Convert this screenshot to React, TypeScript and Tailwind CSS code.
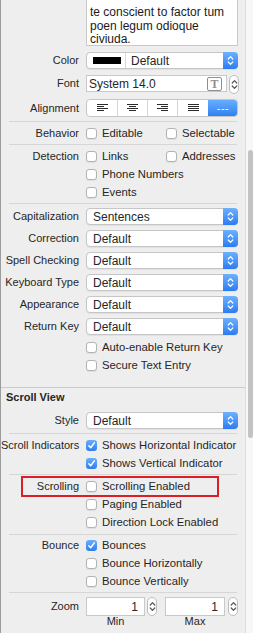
import React from 'react';

const Chevrons = ({ color = '#fff' }: { color?: string }) => (
  <svg width="7" height="13" viewBox="0 0 7 13" fill="none">
    <path d="M1.2 5 L3.5 2.6 L5.8 5" stroke={color} strokeWidth="1.2" strokeLinecap="round" strokeLinejoin="round" />
    <path d="M1.2 8 L3.5 10.4 L5.8 8" stroke={color} strokeWidth="1.2" strokeLinecap="round" strokeLinejoin="round" />
  </svg>
);

const Label = ({ children }: { children?: React.ReactNode }) => (
  <div className="w-[79px] shrink-0 pr-[1px] text-right whitespace-nowrap">{children}</div>
);

const Popup = ({ value, swatch }: { value: string; swatch?: boolean }) => (
  <div className="ml-[6px] flex h-[17px] w-[152px] items-center rounded-[4px] border border-[#c6c6c6] bg-white shadow-[0_1px_1px_rgba(0,0,0,0.06)]">
    {swatch && (
      <div className="flex h-full items-center border-r border-[#d8d8d8] pl-[6px] pr-[4px]">
        <div className="h-[7px] w-[28px] bg-black" />
      </div>
    )}
    <span className={`flex-1 text-[12px] ${swatch ? 'pl-[5px]' : 'pl-[6px]'}`}>{value}</span>
    <div className="-my-px -mr-px flex h-[17px] w-[15px] items-center justify-center rounded-r-[4px] bg-linear-to-b from-[#6cb1fd] to-[#2c7cf1]">
      <Chevrons />
    </div>
  </div>
);

const Check = ({ on }: { on?: boolean }) =>
  on ? (
    <div className="flex h-[11px] w-[11px] shrink-0 items-center justify-center rounded-[3px] bg-linear-to-b from-[#69aefc] to-[#2d7df2]">
      <svg width="9" height="9" viewBox="0 0 9 9" fill="none">
        <path d="M1.8 4.8 L3.7 6.7 L7.3 1.9" stroke="#fff" strokeWidth="1.5" strokeLinecap="round" strokeLinejoin="round" />
      </svg>
    </div>
  ) : (
    <div className="h-[11px] w-[11px] shrink-0 rounded-[3px] border border-[#b3b3b3] bg-white shadow-[0_1px_1px_rgba(0,0,0,0.07)]" />
  );

const CheckRow = ({
  label,
  text,
  on,
  second,
  className = '',
}: {
  label?: string;
  text: string;
  on?: boolean;
  second?: string;
  className?: string;
}) => (
  <div className={`flex h-[18px] items-center ${className}`}>
    <Label>{label}</Label>
    <div className="ml-[6px] flex w-[80px] shrink-0 items-center">
      <Check on={on} />
      <span className="ml-[5px] whitespace-nowrap text-[11.3px]">{text}</span>
    </div>
    {second && (
      <div className="flex items-center">
        <Check />
        <span className="ml-[5px] whitespace-nowrap text-[11.3px]">{second}</span>
      </div>
    )}
  </div>
);

const Sep = ({ className = '' }: { className?: string }) => (
  <div className={`ml-[8px] h-px w-[228px] bg-[#d6d6d6] ${className}`} />
);

const Stepper = () => (
  <div className="flex h-[19px] w-[10px] shrink-0 items-center justify-center rounded-full border border-[#bdbdbd] bg-white">
    <Chevrons color="#555" />
  </div>
);

const AlignIcon = ({ kind }: { kind: 'left' | 'center' | 'right' | 'justify' }) => {
  const widths = kind === 'justify' ? [11, 11, 11, 11] : [11, 7, 11, 7];
  return (
    <svg width="11" height="8" viewBox="0 0 11 8">
      {widths.map((w, i) => {
        const x = kind === 'center' ? (11 - w) / 2 : kind === 'right' ? 11 - w : 0;
        return <rect key={i} x={x} y={i * 2} width={w} height="1" fill="#2a2a2a" />;
      })}
    </svg>
  );
};

export default function App() {
  const popups: [string, string][] = [
    ['Capitalization', 'Sentences'],
    ['Correction', 'Default'],
    ['Spell Checking', 'Default'],
    ['Keyboard Type', 'Default'],
    ['Appearance', 'Default'],
    ['Return Key', 'Default'],
  ];

  return (
    <div
      className="flex h-[633px] w-[253px] overflow-hidden border-l border-[#9c9c9c] bg-[#eeeeee] text-[11px] text-[#262626]"
      style={{ fontFamily: '"Liberation Sans", Arial, sans-serif' }}
    >
      <div className="flex w-[244px] shrink-0 flex-col">
        {/* text view */}
        <div className="ml-[85px] h-[46px] w-[152px] border-x border-b border-[#c9c9c9] bg-white pl-[3px] pt-[6px] text-[12px] leading-[13.5px] text-[#1a1a1a]">
          te conscient to factor tum
          <br />
          poen legum odioque
          <br />
          civiuda.
        </div>

        <div className="mt-[6px] flex items-center">
          <Label>Color</Label>
          <Popup value="Default" swatch />
        </div>

        <div className="mt-[6px] flex items-start">
          <Label>Font</Label>
          <div className="ml-[6px] flex h-[17px] w-[141px] items-center border border-[#c9c9c9] bg-white pr-[4px]">
            <span className="flex-1 pl-[2px] text-[12px]">System 14.0</span>
            <div className="flex h-[14px] w-[15px] items-center justify-center rounded-[2px] border-[1.5px] border-[#8e8e8e] text-[12px] font-bold leading-none text-[#8e8e8e]" style={{ fontFamily: '"Liberation Serif", serif' }}>
              T
            </div>
          </div>
          <div className="ml-[2px]">
            <Stepper />
          </div>
        </div>

        <div className="mt-[5px] flex items-center">
          <Label>Alignment</Label>
          <div className="ml-[6px] flex h-[18px] w-[152px] overflow-hidden rounded-[4px] border border-[#c6c6c6] bg-white">
            <div className="flex w-[31px] items-center justify-center border-r border-[#d6d6d6]"><AlignIcon kind="left" /></div>
            <div className="flex w-[30px] items-center justify-center border-r border-[#d6d6d6]"><AlignIcon kind="center" /></div>
            <div className="flex w-[30px] items-center justify-center border-r border-[#d6d6d6]"><AlignIcon kind="right" /></div>
            <div className="flex w-[30px] items-center justify-center"><AlignIcon kind="justify" /></div>
            <div className="-my-px -mr-px flex flex-1 items-center justify-center bg-linear-to-b from-[#6cb1fd] to-[#2c7cf1] text-[11px] leading-none tracking-[0.5px] text-white">
              ---
            </div>
          </div>
        </div>

        <Sep className="mt-[4px]" />
        <CheckRow className="mt-[2px]" label="Behavior" text="Editable" second="Selectable" />
        <Sep className="mt-[2px]" />
        <CheckRow className="mt-[2px]" label="Detection" text="Links" second="Addresses" />
        <CheckRow text="Phone Numbers" />
        <CheckRow text="Events" />
        <Sep className="mt-[2px]" />

        <div className="mt-[4px] flex flex-col gap-[5px]">
          {popups.map(([l, v]) => (
            <div key={l} className="flex items-center">
              <Label>{l}</Label>
              <Popup value={v} />
            </div>
          ))}
        </div>

        <CheckRow className="mt-[3px]" text="Auto-enable Return Key" />
        <CheckRow text="Secure Text Entry" />

        <div className="mt-[13px] h-px w-full bg-[#cbcbcb]" />
        <div className="flex h-[18px] items-center pl-[5px] font-bold">Scroll View</div>

        <div className="mt-[6px] flex items-center">
          <Label>Style</Label>
          <Popup value="Default" />
        </div>
        <Sep className="mt-[4px]" />
        <CheckRow className="mt-[2px]" label="Scroll Indicators" text="Shows Horizontal Indicator" on />
        <CheckRow text="Shows Vertical Indicator" on />
        <Sep className="mt-[2px]" />
        <div className="relative mt-[2px]">
          <CheckRow label="Scrolling" text="Scrolling Enabled" />
          <div className="absolute -top-[1px] left-[20px] h-[21px] w-[198px] border-2 border-[#dc1f26]" />
        </div>
        <CheckRow text="Paging Enabled" />
        <CheckRow text="Direction Lock Enabled" />
        <Sep className="mt-[3px]" />
        <CheckRow className="mt-[1px]" label="Bounce" text="Bounces" on />
        <CheckRow text="Bounce Horizontally" />
        <CheckRow text="Bounce Vertically" />
        <Sep className="mt-[2px]" />

        <div className="mt-[4px] flex items-center">
          <Label>Zoom</Label>
          <div className="ml-[6px] flex h-[19px] w-[59px] items-center justify-end border border-[#c9c9c9] bg-white pr-[6px] text-[12px]">1</div>
          <div className="ml-[2px]"><Stepper /></div>
          <div className="ml-[8px] flex h-[19px] w-[60px] items-center justify-end border border-[#c9c9c9] bg-white pr-[6px] text-[12px]">1</div>
          <div className="ml-[3px]"><Stepper /></div>
        </div>
        <div className="flex leading-[11px]">
          <div className="ml-[85px] w-[59px] text-center">Min</div>
          <div className="ml-[20px] w-[60px] text-center">Max</div>
        </div>
      </div>

      <div className="flex w-[8px] flex-col border-l border-[#dddddd] bg-[#f7f7f7]">
        <div className="ml-[2px] mt-[150px] h-[288px] w-[5px] rounded-full bg-[#c3c3c3]" />
      </div>
    </div>
  );
}
